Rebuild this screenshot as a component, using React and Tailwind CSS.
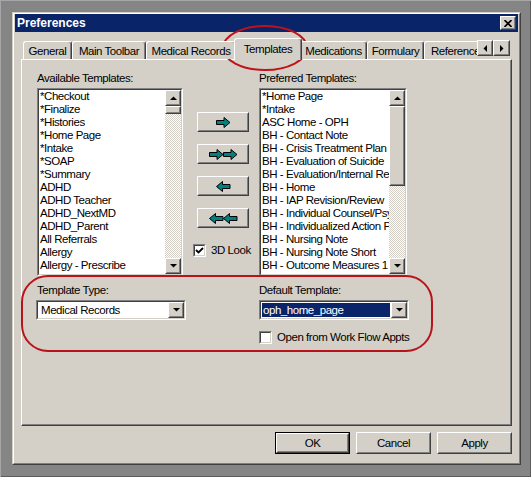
import React from "react";

const FONT = "font-['Liberation_Sans',Arial,sans-serif]";

function Raised({ className = "", inner = "", children }) {
  return (
    <div className={`border border-t-white border-l-white border-r-[#404040] border-b-[#404040] ${className}`}>
      <div className={`h-full w-full border border-t-[#d4d0c8] border-l-[#d4d0c8] border-r-[#808080] border-b-[#808080] bg-[#d4d0c8] flex items-center justify-center ${inner}`}>
        {children}
      </div>
    </div>
  );
}

function Sunken({ className = "", inner = "", children }) {
  return (
    <div className={`border border-t-[#808080] border-l-[#808080] border-r-white border-b-white ${className}`}>
      <div className={`h-full w-full border border-t-[#404040] border-l-[#404040] border-r-[#d4d0c8] border-b-[#d4d0c8] bg-white ${inner}`}>
        {children}
      </div>
    </div>
  );
}

function Tri({ dir }) {
  const pts = {
    up: "0,4 7,4 3.5,0.5",
    down: "0,0 7,0 3.5,3.5",
    left: "4,0 4,7 0.5,3.5",
    right: "0,0 0,7 3.5,3.5",
  }[dir];
  const w = dir === "up" || dir === "down" ? 7 : 4;
  const h = dir === "up" || dir === "down" ? 4 : 7;
  return (
    <svg width={w} height={h} viewBox={`0 0 ${w} ${h}`}>
      <polygon points={pts} fill="#000" />
    </svg>
  );
}

function ScrollBar({ thumb }) {
  return (
    <div className="w-[16px] h-full flex flex-col">
      <Raised className="w-[16px] h-[16px] shrink-0">
        <Tri dir="up" />
      </Raised>
      <div className="flex-1 flex flex-col bg-[image:repeating-conic-gradient(#d4d0c8_0%_25%,#ffffff_0%_50%)] bg-[length:2px_2px]">
        <Raised className="w-[16px] shrink-0">
          <div style={{ height: thumb - 4 }} />
        </Raised>
      </div>
      <Raised className="w-[16px] h-[16px] shrink-0">
        <Tri dir="down" />
      </Raised>
    </div>
  );
}

function ListBox({ items, thumb, width }) {
  return (
    <Sunken className={width} inner="flex">
      <div className="flex-1 overflow-hidden pl-[1px]">
        {items.map((t, i) => (
          <div key={i} className="h-[13px] leading-[13px] whitespace-nowrap text-black">
            {t}
          </div>
        ))}
      </div>
      <ScrollBar thumb={thumb} />
    </Sunken>
  );
}

function ArrowSvg({ kind }) {
  const one = (x, flip) =>
    flip
      ? `${x + 14},3.5 ${x + 6.5},3.5 ${x + 6.5},0.5 ${x + 0.5},5.5 ${x + 6.5},10.5 ${x + 6.5},7.5 ${x + 14},7.5`
      : `${x + 0.5},3.5 ${x + 8},3.5 ${x + 8},0.5 ${x + 14},5.5 ${x + 8},10.5 ${x + 8},7.5 ${x + 0.5},7.5`;
  if (kind === "r")
    return (
      <svg width="15" height="11" viewBox="0 0 15 11">
        <polygon points={one(0, false)} fill="#008080" stroke="#000" strokeWidth="1" />
      </svg>
    );
  if (kind === "l")
    return (
      <svg width="15" height="11" viewBox="0 0 15 11">
        <polygon points={one(0, true)} fill="#008080" stroke="#000" strokeWidth="1" />
      </svg>
    );
  if (kind === "rr")
    return (
      <svg width="29" height="11" viewBox="0 0 29 11">
        <polygon points={one(0, false)} fill="#008080" stroke="#000" strokeWidth="1" />
        <polygon points={one(14, false)} fill="#008080" stroke="#000" strokeWidth="1" />
      </svg>
    );
  return (
    <svg width="29" height="11" viewBox="0 0 29 11">
      <polygon points={one(0, true)} fill="#008080" stroke="#000" strokeWidth="1" />
      <polygon points={one(14, true)} fill="#008080" stroke="#000" strokeWidth="1" />
    </svg>
  );
}

function CheckBox({ checked }) {
  return (
    <Sunken className="w-[13px] h-[13px] shrink-0" inner="flex items-center justify-center">
      {checked && (
        <svg width="9" height="9" viewBox="0 0 9 9">
          <path d="M1 4 L3.5 6.5 L8 2" stroke="#000" strokeWidth="1.8" fill="none" />
        </svg>
      )}
    </Sunken>
  );
}

function Combo({ text, selected }) {
  return (
    <Sunken className="w-[150px] h-[20px]" inner="flex">
      <div className="flex-1 flex items-center">
        {selected ? (
          <div className="m-[1px] h-[14px] flex-1 bg-[#0a246a] text-white leading-[14px] pl-[1px] whitespace-nowrap">{text}</div>
        ) : (
          <div className="pl-[3px] leading-[14px] text-black whitespace-nowrap">{text}</div>
        )}
      </div>
      <Raised className="w-[16px] h-full shrink-0">
        <Tri dir="down" />
      </Raised>
    </Sunken>
  );
}

function Tab({ label, w, selected, left }) {
  if (selected)
    return (
      <div
        className="relative z-10 -mx-[2px] h-[22px] shrink-0 bg-[#d4d0c8] border-l border-t border-white border-r border-r-[#404040] rounded-t-[3px] shadow-[inset_-1px_0_0_#808080] flex items-start justify-center pt-[3px]"
        style={{ width: w + 4 }}
      >
        <span className="leading-[14px] whitespace-nowrap">{label}</span>
      </div>
    );
  return (
    <div
      className={`h-[18px] mb-[1px] shrink-0 bg-[#d4d0c8] border-l border-t border-white border-r border-r-[#404040] rounded-t-[3px] shadow-[inset_-1px_0_0_#808080] flex items-start pt-[2px] overflow-hidden ${left ? "justify-start pl-[6px]" : "justify-center"}`}
      style={{ width: w }}
    >
      <span className="leading-[14px] whitespace-nowrap">{label}</span>
    </div>
  );
}

function Btn({ label, def }) {
  const inner = (
    <Raised className={def ? "w-[73px] h-[20px]" : "w-[75px] h-[22px]"}>
      <span className="leading-[14px]">{label}</span>
    </Raised>
  );
  if (def) return <div className="border border-black w-[75px] h-[22px]">{inner}</div>;
  return inner;
}

const avail = [
  "*Checkout",
  "*Finalize",
  "*Histories",
  "*Home Page",
  "*Intake",
  "*SOAP",
  "*Summary",
  "ADHD",
  "ADHD Teacher",
  "ADHD_NextMD",
  "ADHD_Parent",
  "All Referrals",
  "Allergy",
  "Allergy - Prescribe",
  "Antepartum Hx - OBH",
];

const pref = [
  "*Home Page",
  "*Intake",
  "ASC Home - OPH",
  "BH - Contact Note",
  "BH - Crisis Treatment Plan",
  "BH - Evaluation of Suicide",
  "BH - Evaluation/Internal Review",
  "BH - Home",
  "BH - IAP Revision/Review",
  "BH - Individual Counsel/Psych",
  "BH - Individualized Action Plan",
  "BH - Nursing Note",
  "BH - Nursing Note Short",
  "BH - Outcome Measures 1",
  "BH - Outcome Measures 2",
];

export default function App() {
  return (
    <div className={`${FONT} text-[11.5px] tracking-[-0.45px] text-black relative w-[531px] h-[477px] overflow-hidden bg-[#858585] pt-[12px] pl-[12px] shadow-[inset_1px_1px_0_#a6a6a6,inset_-1px_-1px_0_#5c5c5c]`}>
      {/* dialog */}
      <div className="w-[509px] h-[453px] border border-t-[#d4d0c8] border-l-[#d4d0c8] border-r-[#404040] border-b-[#404040]">
        <div className="w-full h-full border border-t-white border-l-white border-r-[#808080] border-b-[#808080] bg-[#d4d0c8] px-[1px] flex flex-col">
          {/* title bar */}
          <div className="h-[18px] bg-[#0a246a] flex items-center justify-between pl-[2px] pr-[2px]">
            <span className="text-white font-bold text-[12px] tracking-[0px] leading-[14px]">Preferences</span>
            <Raised className="w-[16px] h-[14px]">
              <svg width="8" height="7" viewBox="0 0 8 7">
                <path d="M0.5 0 L7.5 7 M7.5 0 L0.5 7" stroke="#000" strokeWidth="1.6" />
              </svg>
            </Raised>
          </div>

          {/* tab area */}
          <div className="ml-[6px] w-[491px] mt-[6px] flex flex-col">
            <div className="relative z-10 -mb-px h-[22px] flex">
              <div className="ml-[2px] w-[454px] h-[22px] overflow-hidden flex items-end">
                <Tab label="General" w={49} />
                <Tab label="Main Toolbar" w={74} />
                <Tab label="Medical Records" w={90} />
                <Tab label="Templates" w={64} selected />
                <Tab label="Medications" w={67} />
                <Tab label="Formulary" w={57} />
                <Tab label="Reference" w={70} left />
              </div>
              <div className="flex mt-[2px] h-[16px]">
                <Raised className="w-[16px] h-[16px]">
                  <Tri dir="left" />
                </Raised>
                <Raised className="w-[17px] h-[16px]">
                  <Tri dir="right" />
                </Raised>
              </div>
            </div>

            {/* panel */}
            <div className="h-[367px] border-t border-l border-white border-r border-b border-r-[#404040] border-b-[#404040]">
              <div className="h-full border-r border-b border-[#808080] flex flex-col">
                <div className="flex mt-[11px] ml-[15px]">
                  <div className="w-[146px] flex flex-col">
                    <div className="h-[14px] leading-[14px] whitespace-nowrap">Available Templates:</div>
                    <ListBox items={avail} thumb={8} width="mt-[3px] h-[188px] w-[146px]" />
                  </div>
                  <div className="w-[76px] flex flex-col">
                    <div className="mt-[41px] ml-[14px] flex flex-col gap-[12px]">
                      <Raised className="w-[52px] h-[20px]"><ArrowSvg kind="r" /></Raised>
                      <Raised className="w-[52px] h-[20px]"><ArrowSvg kind="rr" /></Raised>
                      <Raised className="w-[52px] h-[20px]"><ArrowSvg kind="l" /></Raised>
                      <Raised className="w-[52px] h-[20px]"><ArrowSvg kind="ll" /></Raised>
                    </div>
                    <div className="mt-[15px] ml-[10px] flex items-center gap-[5px]">
                      <CheckBox checked />
                      <span className="leading-[14px] whitespace-nowrap">3D Look</span>
                    </div>
                  </div>
                  <div className="w-[148px] flex flex-col">
                    <div className="h-[14px] leading-[14px] whitespace-nowrap">Preferred Templates:</div>
                    <ListBox items={pref} thumb={80} width="mt-[3px] h-[188px] w-[148px]" />
                  </div>
                </div>

                <div className="flex mt-[7px] ml-[14px]">
                  <div className="w-[150px] flex flex-col">
                    <div className="h-[14px] leading-[14px] ml-[1px] whitespace-nowrap">Template Type:</div>
                    <div className="mt-[3px]">
                      <Combo text="Medical Records" />
                    </div>
                  </div>
                  <div className="ml-[73px] w-[150px] flex flex-col">
                    <div className="h-[14px] leading-[14px] whitespace-nowrap">Default Template:</div>
                    <div className="mt-[3px]">
                      <Combo text="oph_home_page" selected />
                    </div>
                    <div className="mt-[10px] flex items-center gap-[5px] whitespace-nowrap">
                      <CheckBox />
                      <span className="leading-[14px] whitespace-nowrap">Open from Work Flow Appts</span>
                    </div>
                  </div>
                </div>
              </div>
            </div>

            {/* buttons */}
            <div className="mt-[6px] flex justify-end gap-[6px]">
              <Btn label="OK" def />
              <Btn label="Cancel" />
              <Btn label="Apply" />
            </div>
          </div>
        </div>
      </div>

      {/* red annotations */}
      <svg className="absolute left-0 top-0 pointer-events-none" width="531" height="477" viewBox="0 0 531 477">
        <ellipse cx="265" cy="48" rx="42" ry="22" fill="none" stroke="#c0121a" strokeWidth="2" />
        <rect x="22" y="276" width="410" height="75" rx="26" ry="26" fill="none" stroke="#b8121a" strokeWidth="2" />
      </svg>
    </div>
  );
}
